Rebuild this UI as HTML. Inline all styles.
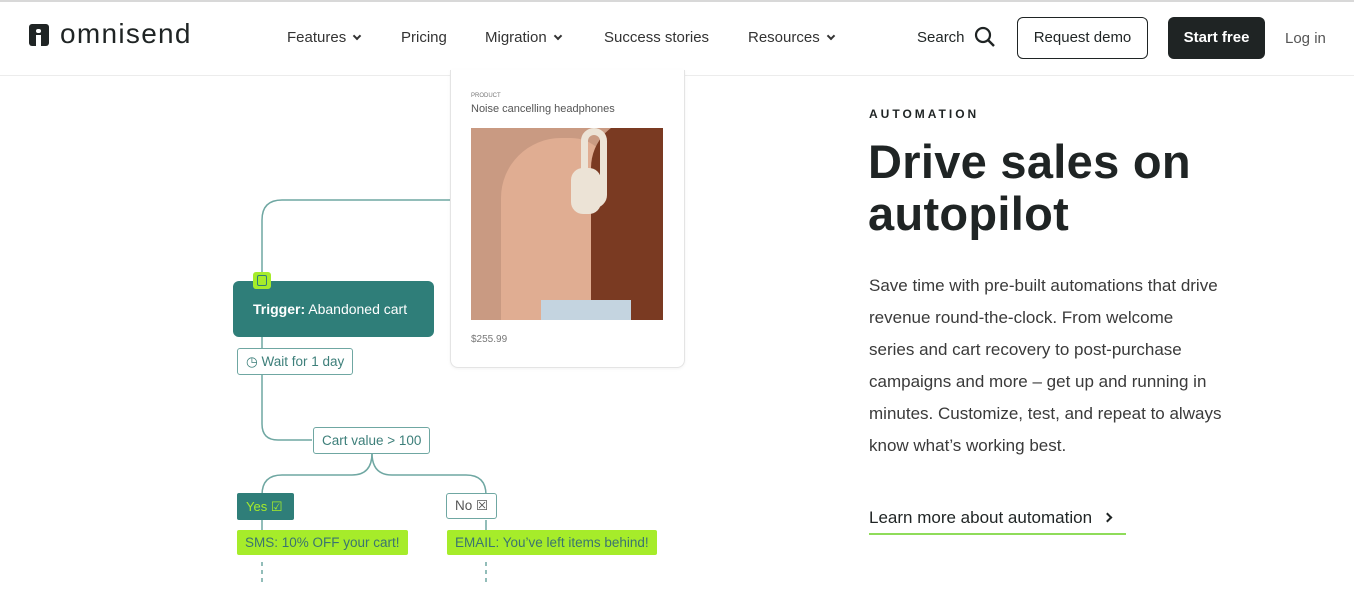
<!DOCTYPE html>
<html><head><meta charset="utf-8"><style>
*{margin:0;padding:0;box-sizing:border-box}
body{width:1354px;height:599px;overflow:hidden;background:#fff;font-family:"Liberation Sans",sans-serif;color:#1f2424;position:relative}
.a{position:absolute}
.nav{top:0;left:0;width:1354px;height:76px;border-top:2px solid #d8d8d8;border-bottom:1px solid #ececec}
.nl{font-size:15px;color:#333;top:29px}
.chev{display:inline-block;width:6px;height:6px;border-right:2px solid #333;border-bottom:2px solid #333;transform:rotate(45deg);margin-left:8px;position:relative;top:-3px}
.box{border:1.5px solid #6fa7a2;border-radius:3px;background:#fff;color:#3d7f7a;font-size:13.5px;padding:0 8px;line-height:25px}
.green{background:#a6ec2a;color:#3b7470;font-size:13.5px;line-height:25px;padding:0 8px;border-radius:2px}
</style></head><body>
<div class="a nav"></div>
<div class="a" style="left:29px;top:24px;width:20px;height:22px;background:#1f2424;border-radius:3px"></div>
<div class="a" style="left:36px;top:29px;width:5px;height:4px;background:#fff;border-radius:2px"></div>
<div class="a" style="left:36px;top:35px;width:5px;height:11px;background:#fff"></div>
<div class="a" style="left:60px;top:18px;font-size:28px;color:#1f2424;letter-spacing:1.3px">omnisend</div>
<div class="a nl" style="left:287px">Features<span class="chev"></span></div>
<div class="a nl" style="left:401px">Pricing</div>
<div class="a nl" style="left:485px">Migration<span class="chev"></span></div>
<div class="a nl" style="left:604px">Success stories</div>
<div class="a nl" style="left:748px">Resources<span class="chev"></span></div>
<div class="a nl" style="left:917px;color:#1f2424">Search</div>
<svg class="a" style="left:974px;top:26px" width="22" height="22" viewBox="0 0 22 22"><circle cx="9" cy="9" r="7" fill="none" stroke="#1f2424" stroke-width="2.2"/><path d="M14 14l6 6" stroke="#1f2424" stroke-width="2.4"/></svg>
<div class="a" style="left:1017px;top:17px;width:131px;height:42px;border:1px solid #1f2424;border-radius:6px;font-size:15px;line-height:40px;text-align:center">Request demo</div>
<div class="a" style="left:1168px;top:17px;width:97px;height:42px;background:#1f2424;border-radius:6px;font-size:15px;line-height:42px;text-align:center;color:#fff;font-weight:bold">Start free</div>
<div class="a nl" style="left:1285px;top:30px;color:#555">Log in</div>

<svg class="a" style="left:0;top:0" width="700" height="599">
<g fill="none" stroke="#6fa7a2" stroke-width="1.5">
<path d="M450 200H282q-20 0-20 20V275"/>
<path d="M262 335V348M262 374V424q0 16 16 16H312"/>
<path d="M372 453q0 22-20 22H282q-20 0-20 20"/>
<path d="M372 453q0 22 20 22H466q20 0 20 20"/>
<path d="M262 520V530M486 520V530"/>
<path d="M262 562V582M486 562V582" stroke-dasharray="4 4"/>
</g></svg>
<div class="a" style="left:450px;top:70px;width:235px;height:298px;border:1px solid #e4e4e4;border-top:none;border-radius:0 0 8px 8px;background:#fff;box-shadow:0 1px 3px rgba(0,0,0,.05)"></div>
<div class="a" style="left:471px;top:93px;font-size:6px;color:#777">PRODUCT</div>
<div class="a" style="left:471px;top:103px;font-size:11px;color:#555">Noise cancelling headphones</div>
<div class="a" style="left:471px;top:128px;width:192px;height:192px;background:#c99a82;overflow:hidden">
<div class="a" style="left:30px;top:10px;width:110px;height:190px;background:#e0ad92;border-radius:60px 40px 0 0"></div>
<div class="a" style="left:120px;top:-10px;width:90px;height:210px;background:#7a3a22;border-radius:50px 0 0 0"></div>
<div class="a" style="left:110px;top:0;width:26px;height:80px;border:7px solid #ece3d6;border-radius:20px;"></div>
<div class="a" style="left:100px;top:40px;width:30px;height:46px;background:#ece3d6;border-radius:12px"></div>
<div class="a" style="left:70px;top:172px;width:90px;height:20px;background:#c4d4e0"></div>
</div>
<div class="a" style="left:471px;top:334px;font-size:10px;color:#777">$255.99</div>

<div class="a" style="left:233px;top:281px;width:201px;height:56px;background:#2f7e79;border-radius:6px;color:#fff;font-size:14px;line-height:56px;padding-left:20px"><b>Trigger:</b> Abandoned cart</div>
<div class="a" style="left:253px;top:272px;width:18px;height:17px;background:#a6ec2a;border-radius:3px"></div>
<div class="a" style="left:257px;top:275px;width:10px;height:11px;border:1.5px solid #2f7e79;border-radius:2px"></div>
<div class="a box" style="left:237px;top:348px">◷ Wait for 1 day</div>
<div class="a box" style="left:313px;top:427px">Cart value &gt; 100</div>
<div class="a" style="left:237px;top:493px;width:57px;height:27px;background:#2f7e79;border-radius:2px;color:#a6ec2a;font-size:13px;line-height:27px;padding-left:9px">Yes ☑</div>
<div class="a box" style="left:446px;top:493px;color:#555;line-height:24px">No ☒</div>
<div class="a green" style="left:237px;top:530px">SMS: 10% OFF your cart!</div>
<div class="a green" style="left:447px;top:530px">EMAIL: You’ve left items behind!</div>

<div class="a" style="left:869px;top:107px;font-size:12px;letter-spacing:3px;font-weight:bold">AUTOMATION</div>
<div class="a" style="left:868px;top:136px;font-size:47px;font-weight:bold;line-height:52px;letter-spacing:0.3px">Drive sales on<br>autopilot</div>
<div class="a" style="left:869px;top:270px;width:370px;font-size:17px;line-height:32px;color:#3a3a3a">Save time with pre-built automations that drive<br>revenue round-the-clock. From welcome<br>series and cart recovery to post-purchase<br>campaigns and more – get up and running in<br>minutes. Customize, test, and repeat to always<br>know what’s working best.</div>
<div class="a" style="left:869px;top:508px;font-size:17px;color:#1f2424">Learn more about automation<span style="display:inline-block;width:7px;height:7px;border-right:2px solid #1f2424;border-bottom:2px solid #1f2424;transform:rotate(-45deg);margin-left:12px;position:relative;top:-2px"></span></div>
<div class="a" style="left:869px;top:533px;width:257px;height:2px;background:#8fdc5a"></div>
</body></html>
